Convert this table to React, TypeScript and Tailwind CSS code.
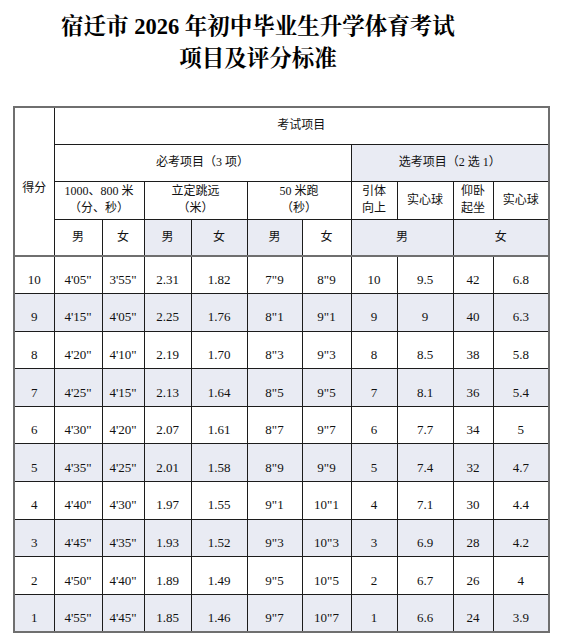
import React from "react";

const rows: string[][] = [
  ["10", "4'05\"", "3'55\"", "2.31", "1.82", "7\"9", "8\"9", "10", "9.5", "42", "6.8"],
  ["9", "4'15\"", "4'05\"", "2.25", "1.76", "8\"1", "9\"1", "9", "9", "40", "6.3"],
  ["8", "4'20\"", "4'10\"", "2.19", "1.70", "8\"3", "9\"3", "8", "8.5", "38", "5.8"],
  ["7", "4'25\"", "4'15\"", "2.13", "1.64", "8\"5", "9\"5", "7", "8.1", "36", "5.4"],
  ["6", "4'30\"", "4'20\"", "2.07", "1.61", "8\"7", "9\"7", "6", "7.7", "34", "5"],
  ["5", "4'35\"", "4'25\"", "2.01", "1.58", "8\"9", "9\"9", "5", "7.4", "32", "4.7"],
  ["4", "4'40\"", "4'30\"", "1.97", "1.55", "9\"1", "10\"1", "4", "7.1", "30", "4.4"],
  ["3", "4'45\"", "4'35\"", "1.93", "1.52", "9\"3", "10\"3", "3", "6.9", "28", "4.2"],
  ["2", "4'50\"", "4'40\"", "1.89", "1.49", "9\"5", "10\"5", "2", "6.7", "26", "4"],
  ["1", "4'55\"", "4'45\"", "1.85", "1.46", "9\"7", "10\"7", "1", "6.6", "24", "3.9"],
];

const widths = [40, 48, 42, 47, 56, 55, 49, 46, 56, 40, 56];

const cell = "border border-[#1c1c1c] text-center align-middle p-0";
const shade = "bg-[#e9ebf3]";
const sep = "border-b-2 border-b-[#6f6f6f]";

export default function App() {
  return (
    <div className="w-[567px] h-[644px] bg-white text-[#111] overflow-hidden">
      <div
        className="pt-[11px] pr-[51px] text-center text-[22.5px] leading-[32px] font-bold text-black"
        style={{ fontFamily: '"Liberation Serif", "Noto Serif CJK SC", "Noto Sans CJK SC", serif' }}
      >
        <div>宿迁市 2026 年初中毕业生升学体育考试</div>
        <div>项目及评分标准</div>
      </div>
      <table
        className="mt-[31px] ml-[13px] w-[535px] table-fixed border-collapse border-2 border-[#6f6f6f] text-[12px] leading-[17px]"
        style={{ fontFamily: '"Liberation Serif", "Noto Sans CJK SC", serif' }}
      >
        <colgroup>
          {widths.map((w, i) => (
            <col key={i} style={{ width: w }} />
          ))}
        </colgroup>
        <thead>
          <tr className="h-[37px]">
            <td rowSpan={4} className={`${cell} ${sep} pt-[14px]`}>得分</td>
            <td colSpan={10} className={cell}>考试项目</td>
          </tr>
          <tr className="h-[37px]">
            <td colSpan={6} className={cell}>必考项目（3 项）</td>
            <td colSpan={4} className={`${cell} ${shade}`}>选考项目（2 选 1）</td>
          </tr>
          <tr className="h-[38px]">
            <td colSpan={2} className={cell}>
              1000、800 米<br />（分、秒）
            </td>
            <td colSpan={2} className={cell}>
              立定跳远<br />（米）
            </td>
            <td colSpan={2} className={cell}>
              50 米跑<br />（秒）
            </td>
            <td className={cell}>
              引体<br />向上
            </td>
            <td className={cell}>实心球</td>
            <td className={cell}>
              仰卧<br />起坐
            </td>
            <td className={cell}>实心球</td>
          </tr>
          <tr className="h-[37px]">
            <td className={`${cell} ${sep}`}>男</td>
            <td className={`${cell} ${sep}`}>女</td>
            <td className={`${cell} ${sep} ${shade}`}>男</td>
            <td className={`${cell} ${sep} ${shade}`}>女</td>
            <td className={`${cell} ${sep} ${shade}`}>男</td>
            <td className={`${cell} ${sep}`}>女</td>
            <td colSpan={2} className={`${cell} ${sep} ${shade}`}>男</td>
            <td colSpan={2} className={`${cell} ${sep} ${shade}`}>女</td>
          </tr>
        </thead>
        <tbody className="text-[13px]">
          {rows.map((r, i) => (
            <tr key={i} className={`h-[37.6px] ${i % 2 === 1 ? shade : ""}`}>
              {r.map((v, j) => (
                <td key={j} className={`${cell} pt-[9px]`}>
                  {v}
                </td>
              ))}
            </tr>
          ))}
        </tbody>
      </table>
    </div>
  );
}
